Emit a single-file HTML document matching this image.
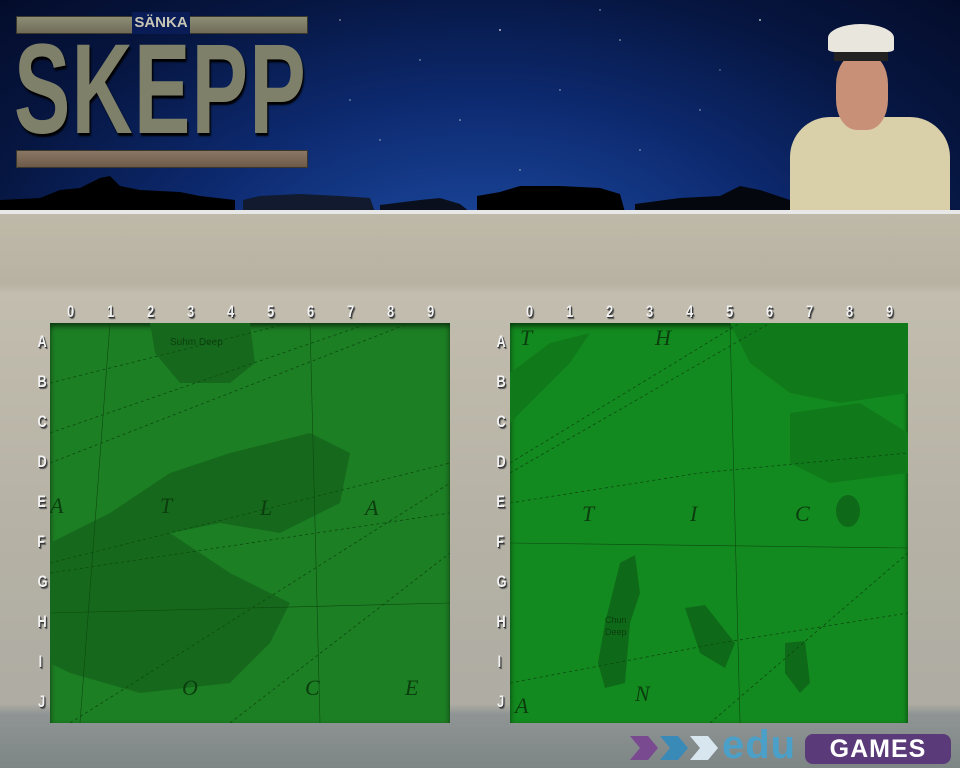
<!DOCTYPE html>
<html><head><meta charset="utf-8"><style>
body{margin:0;width:960px;height:768px;overflow:hidden;position:relative;font-family:"Liberation Sans",sans-serif;background:#b9b4a4}
#hdr{position:absolute;left:0;top:0;width:960px;height:212px;background:radial-gradient(ellipse at 50% 130%,#1f4fa8 0%,#0d2a70 45%,#061641 75%,#040c2a 100%)}
#hline{position:absolute;left:0;top:210px;width:960px;height:4px;background:#e8e8e8}
#bg{position:absolute;left:0;top:214px;width:960px;height:554px;background:linear-gradient(180deg,#bfb9a8 0,#b7b2a2 70px,#c2bdae 80px,#b6b2a5 300px,#aeaca3 490px,#8f9594 500px,#7d8585 554px)}
.lbl{position:absolute;color:#f2f2f2;font-weight:bold;font-size:17px;font-family:"Liberation Sans Narrow","Liberation Sans",sans-serif;text-shadow:1px 1px 0 #333,2px 2px 1px #555;transform:scaleX(.75)}
.board{position:absolute;width:400px;height:400px;box-shadow:inset 0 3px 6px rgba(0,0,0,.6);overflow:hidden}
.plank{position:absolute;left:16px;height:16px;width:290px;background:linear-gradient(#8d8d74,#6f6b57);border:1px solid #3a382c}
</style></head><body>
<div id="hdr">
<svg width="960" height="212" style="position:absolute;left:0;top:0">
<g fill="#fff" opacity=".7">
<circle cx="340" cy="20" r=".8"/><circle cx="420" cy="60" r=".7"/><circle cx="500" cy="30" r="1"/><circle cx="560" cy="90" r=".7"/><circle cx="620" cy="40" r=".8"/><circle cx="700" cy="110" r=".7"/><circle cx="760" cy="20" r="1"/><circle cx="380" cy="140" r=".7"/><circle cx="460" cy="120" r=".8"/><circle cx="640" cy="150" r=".7"/><circle cx="720" cy="70" r=".6"/><circle cx="520" cy="170" r=".7"/><circle cx="900" cy="160" r=".8"/><circle cx="600" cy="10" r=".7"/><circle cx="350" cy="100" r=".7"/>
</g>
<path d="M0 200 L40 198 60 190 80 188 100 178 110 176 120 186 140 190 180 192 200 196 235 200 235 212 0 212Z" fill="#000"/>
<path d="M243 200 L260 196 300 194 340 196 370 198 375 212 243 212Z" fill="#111a2e"/>
<path d="M380 205 L420 200 440 198 460 204 470 212 380 212Z" fill="#0a0f1e"/>
<path d="M477 196 L500 192 520 186 560 186 600 188 620 194 625 212 477 212Z" fill="#000"/>
<path d="M635 204 L680 198 720 196 740 186 760 190 790 200 790 212 635 212Z" fill="#05070f"/>
</svg>
<div class="plank" style="top:16px"></div>
<div style="position:absolute;left:132px;top:12px;width:58px;height:22px;background:#0a1c55;color:#c8c6b6;font-weight:bold;font-size:15px;text-align:center;line-height:22px">SÄNKA</div>
<div style="position:absolute;left:14px;top:26px;font-weight:bold;font-size:128px;line-height:128px;color:#7f806a;letter-spacing:2px;transform:scaleX(.66);transform-origin:left;text-shadow:2px 3px 2px #000;font-family:'Liberation Sans',sans-serif">SKEPP</div>
<div class="plank" style="top:150px;background:linear-gradient(#8a7764,#6d5a48)"></div>
<div style="position:absolute;left:790px;top:22px;width:160px;height:190px">
<div style="position:absolute;left:0;top:95px;width:160px;height:95px;border-radius:40px 40px 0 0;background:#d9cfa8"></div>
<div style="position:absolute;left:46px;top:32px;width:52px;height:76px;border-radius:40%;background:#c99078"></div>
<div style="position:absolute;left:38px;top:2px;width:66px;height:28px;border-radius:50% 50% 10% 10%;background:#e9e6de"></div>
<div style="position:absolute;left:44px;top:30px;width:54px;height:9px;background:#222"></div>
</div>
</div>
<div id="hline"></div>
<div id="bg"></div>
<div class="lbl" style="left:66px;top:302px">0</div><div class="lbl" style="left:106px;top:302px">1</div><div class="lbl" style="left:146px;top:302px">2</div><div class="lbl" style="left:186px;top:302px">3</div><div class="lbl" style="left:226px;top:302px">4</div><div class="lbl" style="left:266px;top:302px">5</div><div class="lbl" style="left:306px;top:302px">6</div><div class="lbl" style="left:346px;top:302px">7</div><div class="lbl" style="left:386px;top:302px">8</div><div class="lbl" style="left:426px;top:302px">9</div>
<div class="lbl" style="left:525px;top:302px">0</div><div class="lbl" style="left:565px;top:302px">1</div><div class="lbl" style="left:605px;top:302px">2</div><div class="lbl" style="left:645px;top:302px">3</div><div class="lbl" style="left:685px;top:302px">4</div><div class="lbl" style="left:725px;top:302px">5</div><div class="lbl" style="left:765px;top:302px">6</div><div class="lbl" style="left:805px;top:302px">7</div><div class="lbl" style="left:845px;top:302px">8</div><div class="lbl" style="left:885px;top:302px">9</div>
<div class="lbl" style="left:36px;top:332px">A</div><div class="lbl" style="left:36px;top:372px">B</div><div class="lbl" style="left:36px;top:412px">C</div><div class="lbl" style="left:36px;top:452px">D</div><div class="lbl" style="left:36px;top:492px">E</div><div class="lbl" style="left:36px;top:532px">F</div><div class="lbl" style="left:36px;top:572px">G</div><div class="lbl" style="left:36px;top:612px">H</div><div class="lbl" style="left:38px;top:652px">I</div><div class="lbl" style="left:37px;top:692px">J</div>
<div class="lbl" style="left:495px;top:332px">A</div><div class="lbl" style="left:495px;top:372px">B</div><div class="lbl" style="left:495px;top:412px">C</div><div class="lbl" style="left:495px;top:452px">D</div><div class="lbl" style="left:495px;top:492px">E</div><div class="lbl" style="left:495px;top:532px">F</div><div class="lbl" style="left:495px;top:572px">G</div><div class="lbl" style="left:495px;top:612px">H</div><div class="lbl" style="left:497px;top:652px">I</div><div class="lbl" style="left:496px;top:692px">J</div>
<div class="board" style="left:50px;top:323px;background:#1d7f24">
<svg width="400" height="400"><g fill="#16691c"><path d="M100 0 L200 0 205 40 180 60 130 60 105 30Z"/><path d="M0 220 L60 190 120 150 180 130 260 110 300 130 290 180 230 210 170 200 120 210 180 250 240 280 220 320 180 360 90 370 20 350 0 340Z"/></g>
<g stroke="#0c4a10" fill="none" stroke-width=".8" stroke-dasharray="3 3"><path d="M0 60 L400 -40"/><path d="M0 110 L320 0"/><path d="M0 140 L360 0"/><path d="M0 240 L400 140"/><path d="M0 250 L400 190"/><path d="M20 400 L400 160"/><path d="M180 400 L400 230"/></g>
<g stroke="#0c4a10" stroke-width=".6"><line x1="60" y1="0" x2="30" y2="400"/><line x1="260" y1="0" x2="270" y2="400"/><line x1="0" y1="290" x2="400" y2="280"/></g>
<g fill="#0b3d0e" font-family="Liberation Serif" font-style="italic" font-size="22"><text x="110" y="190">T</text><text x="210" y="192">L</text><text x="315" y="192">A</text><text x="132" y="372">O</text><text x="255" y="372">C</text><text x="355" y="372">E</text><text x="0" y="190">A</text></g>
<text x="120" y="22" font-size="10" fill="#0b3d0e">Suhm Deep</text>
</svg></div>
<div class="board" style="left:510px;top:323px;width:398px;background:#138a1f">
<svg width="398" height="400"><g fill="#107a1b"><path d="M0 50 L40 20 80 10 60 40 20 80 0 100Z"/><path d="M220 0 L398 0 398 70 330 80 280 70 240 40Z"/><path d="M280 90 L350 80 398 110 398 150 320 160 280 140Z"/></g>
<g fill="#0e6a18"><path d="M110 240 L125 232 130 270 120 300 115 360 95 365 88 340 95 300Z"/><path d="M175 285 L195 282 225 320 215 345 190 330Z"/><path d="M275 320 L295 318 300 360 290 370 275 350Z"/><ellipse cx="338" cy="188" rx="12" ry="16"/></g>
<g stroke="#0c4a10" fill="none" stroke-width=".8" stroke-dasharray="3 3"><path d="M0 150 L260 0"/><path d="M0 140 L230 0"/><path d="M0 180 L190 150 398 130"/><path d="M0 360 L210 320 398 290"/><path d="M200 400 L398 230"/></g>
<g stroke="#0c4a10" stroke-width=".6"><line x1="0" y1="220" x2="398" y2="225"/><line x1="220" y1="0" x2="230" y2="400"/></g>
<g fill="#0b3d0e" font-family="Liberation Serif" font-style="italic" font-size="22"><text x="72" y="198">T</text><text x="180" y="198">I</text><text x="285" y="198">C</text><text x="5" y="390">A</text><text x="125" y="378">N</text><text x="145" y="22">H</text><text x="10" y="22">T</text></g>
<text x="95" y="300" font-size="9" fill="#0b3d0e">Chun</text><text x="95" y="312" font-size="9" fill="#0b3d0e">Deep</text>
</svg></div>
<div style="position:absolute;left:630px;top:733px;width:92px;height:30px">
<svg width="92" height="30"><path d="M0 3h18l10 12-10 12H0l10-12z" fill="#7a4a90"/><path d="M30 3h18l10 12-10 12H30l10-12z" fill="#3a8ab8"/><path d="M60 3h18l10 12-10 12H60l10-12z" fill="#d8e6f0"/></svg></div>
<div style="position:absolute;left:722px;top:725px;font-size:40px;font-weight:bold;color:#4aa0c8;line-height:40px;letter-spacing:1px;font-family:'Liberation Sans',sans-serif">edu</div>
<div style="position:absolute;left:805px;top:734px;width:146px;height:30px;background:#5a3a78;border-radius:8px;color:#fff;font-weight:900;font-size:25px;line-height:30px;text-align:center;letter-spacing:1px">GAMES</div>
</body></html>
